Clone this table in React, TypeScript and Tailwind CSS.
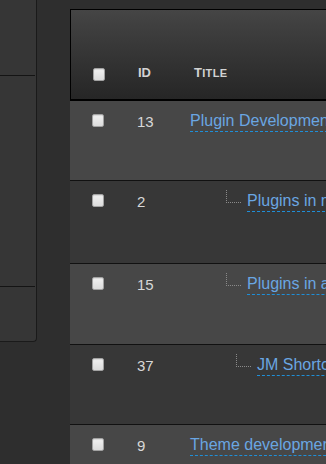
import React from 'react';

type Row = {
  id: number;
  title: string;
  indent: number; // px, 0 = top level
  h: string;
  light: boolean;
};

const rows: Row[] = [
  { id: 13, title: 'Plugin Development', indent: 0, h: 'h-[80px]', light: true },
  { id: 2, title: 'Plugins in multisite', indent: 36, h: 'h-[83px]', light: false },
  { id: 15, title: 'Plugins in a theme', indent: 36, h: 'h-[81px]', light: true },
  { id: 37, title: 'JM Shortcodes', indent: 46, h: 'h-[80px]', light: false },
  { id: 9, title: 'Theme development', indent: 0, h: 'h-[80px]', light: true },
];

const Checkbox = () => (
  <div className="w-[12px] h-[13px] rounded-[2px] border border-[#a2a2a2] bg-gradient-to-b from-[#f2f2f2] to-[#dcdcdc] shadow-[inset_0_1px_1px_rgba(0,0,0,0.1)]" />
);

export default function App() {
  return (
    <div className="w-full h-[464px] bg-[#2e2e2e] overflow-hidden flex font-['Liberation_Sans',Arial,sans-serif]">
      {/* Side panel */}
      <div className="w-[37px] h-[342px] shrink-0 flex flex-col bg-[#363636] border-r border-b border-[#1a1a1a] rounded-br-[4px]">
        <div className="h-[76px] border-b border-[#141414] mr-[1px]" />
        <div className="h-[211px] border-b border-[#141414] mr-[1px]" />
        <div className="flex-1" />
      </div>

      {/* List table */}
      <div className="ml-[33px] mt-[9px] w-[620px] shrink-0">
        {/* Header */}
        <div className="h-[92px] flex items-end pb-[18px] border-t border-l border-b-2 border-black bg-gradient-to-b from-[#454545] to-[#262626] text-[13px] leading-[16px] font-bold text-[#d2d2d2]">
          <div className="w-[55px] flex justify-center pl-[1px]">
            <Checkbox />
          </div>
          <div className="w-[55px] pl-[12px]">ID</div>
          <div className="pl-[13px] tracking-[0.3px]">
            T<span className="text-[11px]">ITLE</span>
          </div>
        </div>

        {/* Rows */}
        {rows.map((r) => (
          <div
            key={r.id}
            className={`${r.h} flex border-b border-[#111] ${r.light ? 'bg-[#474747]' : 'bg-[#373737]'}`}
          >
            <div className="w-[56px] flex justify-center pt-[13px]">
              <Checkbox />
            </div>
            <div className="w-[54px] pl-[11px] pt-[12px] text-[15px] leading-[17px] text-[#d8d8d8]">{r.id}</div>
            <div className="flex-1 pl-[10px] pt-[11px] flex items-start whitespace-nowrap text-[16px] leading-[18px]">
              {r.indent > 0 && (
                <span
                  className="w-[15px] h-[13px] -mt-[2px] mr-[6px] border-l border-b border-dotted border-[#8a8a8a]"
                  style={{ marginLeft: r.indent }}
                />
              )}
              <a className="text-[#6aa6e2] border-b border-dashed border-[#1f8fd8] pb-[1px]">{r.title}</a>
            </div>
          </div>
        ))}
      </div>
    </div>
  );
}
